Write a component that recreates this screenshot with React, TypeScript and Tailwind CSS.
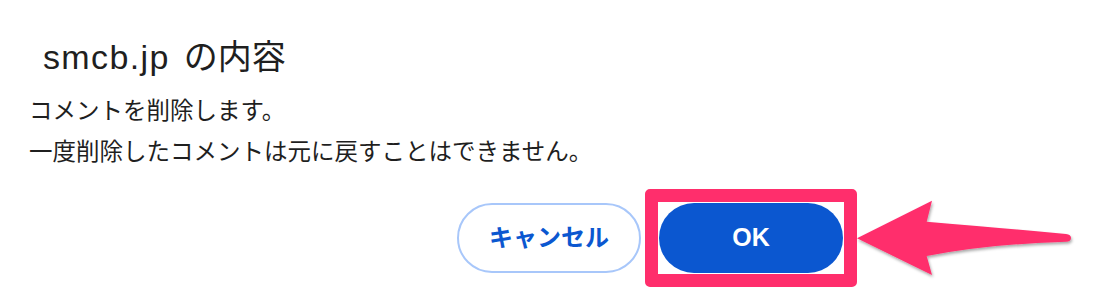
import React from "react";

const font = { fontFamily: '"Liberation Sans", "Noto Sans CJK JP", sans-serif' };

export default function App() {
  return (
    <div
      className="relative w-[1112px] h-[306px] bg-white overflow-hidden"
      style={font}
    >
      <div className="pl-[43px] pt-[37px] text-[34px] leading-[40px] text-[#1f1f1f] whitespace-nowrap">
        <span className="tracking-[0.04em]">smcb.jp</span>
        <span className="ml-[14px]">の内容</span>
      </div>
      <div className="mt-[14px] pl-[29px] text-[23.5px] leading-[41px] text-[#1f1f1f] whitespace-nowrap">
        <div>コメントを削除します。</div>
        <div>一度削除したコメントは元に戻すことはできません。</div>
      </div>
      <div className="mt-[30px] flex justify-end pr-[269px] gap-[18px]">
        <button className="w-[184px] h-[70px] rounded-full border-2 border-[#a8c7fa] bg-white text-[#0b57d0] text-[24px] font-bold flex items-center justify-center">
          キャンセル
        </button>
        <div className="relative">
          <button className="w-[184px] h-[70px] rounded-full bg-[#0b57d0] text-white text-[25px] font-bold flex items-center justify-center">
            OK
          </button>
          <div className="absolute -left-[14px] -right-[14px] -top-[14px] -bottom-[14px] border-[13px] border-[#ff2e6c] rounded-[5px] pointer-events-none" />
        </div>
      </div>
      <svg
        className="absolute inset-0 pointer-events-none"
        width="1112"
        height="306"
        viewBox="0 0 1112 306"
      >
        <defs>
          <filter id="sh" x="-10%" y="-30%" width="130%" height="160%">
            <feDropShadow dx="1" dy="2" stdDeviation="1.6" floodColor="#000" floodOpacity="0.35" />
          </filter>
        </defs>
        <path
          d="M857 238.3 L932 200.7 L926.7 221.7 Q990 227 1066 234 Q1071 234.5 1071 238 Q1071 241.5 1066 241.7 Q990 244 926.7 256 L932 275 Z"
          fill="#ff2e6c"
          filter="url(#sh)"
        />
      </svg>
    </div>
  );
}
